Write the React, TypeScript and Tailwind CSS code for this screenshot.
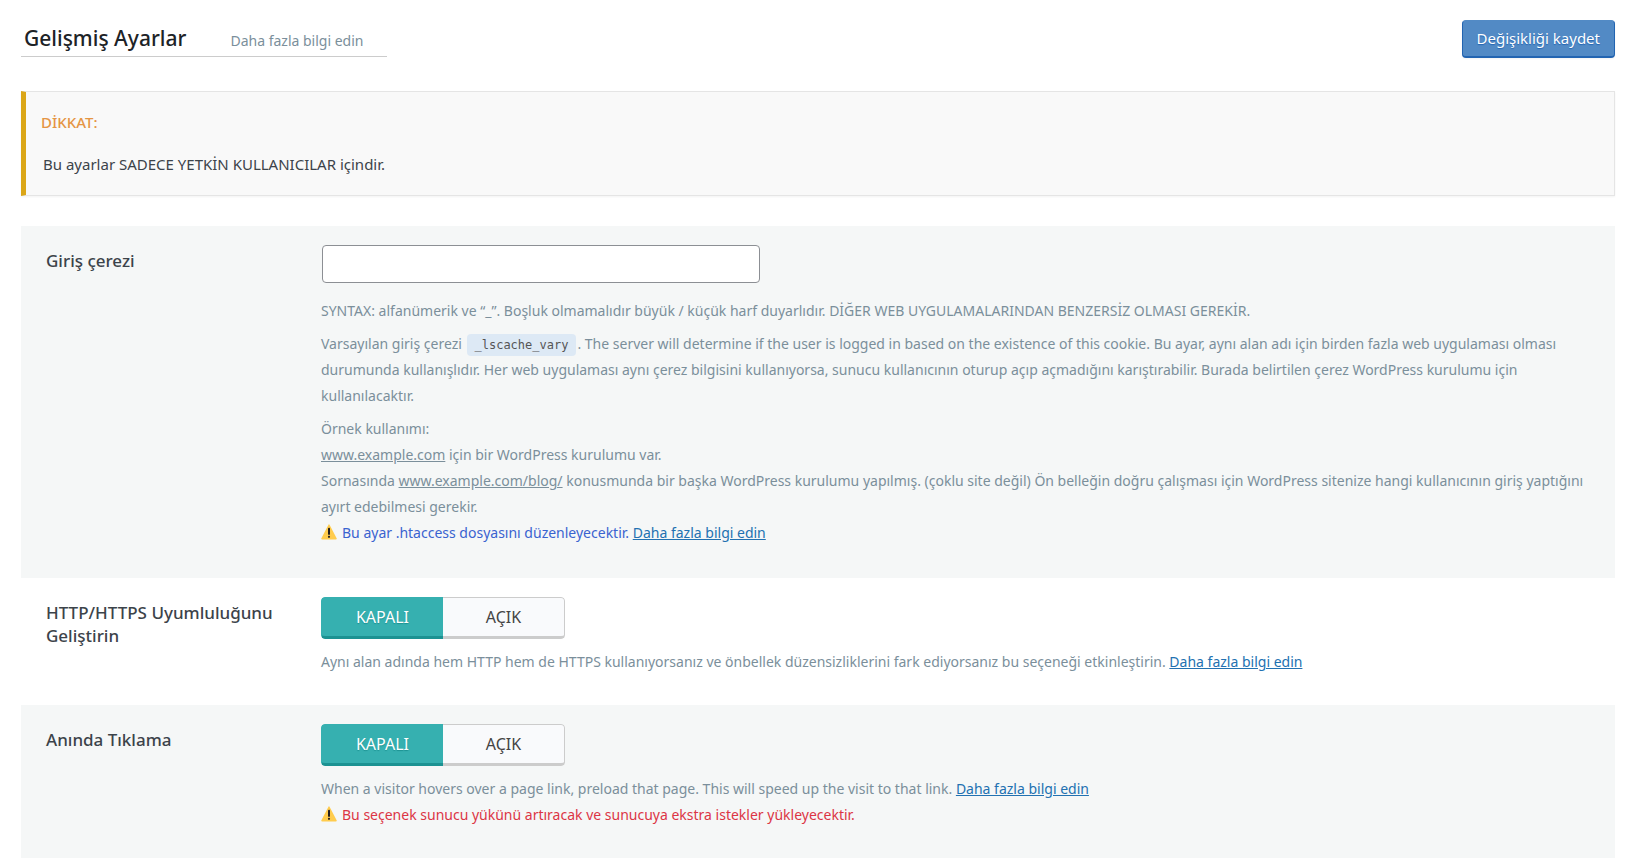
import { useState } from "react";
import type { ReactNode } from "react";

const WarningIcon = () => (
  <svg
    viewBox="0 0 36 36"
    className="inline-block w-4 h-4 mr-[5px] align-[-2px]"
    aria-hidden="true"
  >
    <path
      fill="#FFCC4D"
      d="M2.653 35C.811 35-.001 33.662.847 32.027L16.456 1.972c.849-1.635 2.238-1.635 3.087 0l15.609 30.056c.85 1.634.037 2.972-1.805 2.972H2.653z"
    />
    <path
      fill="#231F20"
      d="M15.583 28.953c0-1.333 1.085-2.418 2.419-2.418 1.333 0 2.418 1.085 2.418 2.418 0 1.334-1.086 2.419-2.418 2.419-1.334 0-2.419-1.085-2.419-2.419zm.186-18.293c0-1.302.961-2.108 2.232-2.108 1.241 0 2.233.837 2.233 2.108v11.938c0 1.271-.992 2.108-2.233 2.108-1.271 0-2.232-.807-2.232-2.108V10.66z"
    />
  </svg>
);

const LearnMore = () => (
  <a href="#" className="text-[#2271b1] underline">
    Daha fazla bilgi edin
  </a>
);

interface SettingRowProps {
  title: ReactNode;
  shaded?: boolean;
  children: ReactNode;
}

const SettingRow = ({ title, shaded, children }: SettingRowProps) => (
  <section
    className={`flex items-start pl-[25px] pr-6 pt-[19px] pb-[30px] ${
      shaded ? "bg-[#f5f7f7]" : "bg-white"
    }`}
  >
    <div className="w-[275px] shrink-0 pr-8 pt-1 text-[17px] leading-[23px] font-medium text-[#3c434a]">
      {title}
    </div>
    <div className="min-w-0 flex-1">{children}</div>
  </section>
);

interface ToggleProps {
  name: string;
  label: string;
}

const Toggle = ({ name, label }: ToggleProps) => {
  const [value, setValue] = useState("off");

  return (
    <div
      role="radiogroup"
      aria-label={label}
      className="inline-flex h-[42px] overflow-hidden rounded align-top text-base"
    >
      <label className="relative flex w-[122px] cursor-pointer">
        <input
          type="radio"
          name={name}
          checked={value === "off"}
          onChange={() => setValue("off")}
          className="peer sr-only"
        />
        <span className="flex flex-1 items-center justify-center rounded-l border border-r-0 border-b-3 border-[#ccc] bg-[#f9fafc] text-[#444] peer-checked:border-[#36b0b0] peer-checked:border-b-[#1c9292] peer-checked:bg-[#36b0b0] peer-checked:text-white peer-checked:text-shadow-[0_1px_1px_#1c9292]">
          KAPALI
        </span>
      </label>
      <label className="relative flex w-[122px] cursor-pointer">
        <input
          type="radio"
          name={name}
          checked={value === "on"}
          onChange={() => setValue("on")}
          className="peer sr-only"
        />
        <span className="flex flex-1 items-center justify-center rounded-r border border-l-0 border-b-3 border-[#ccc] bg-[#f9fafc] text-[#444] peer-checked:border-[#36b0b0] peer-checked:border-b-[#1c9292] peer-checked:bg-[#36b0b0] peer-checked:text-white peer-checked:text-shadow-[0_1px_1px_#1c9292]">
          AÇIK
        </span>
      </label>
    </div>
  );
};

const App = () => {
  const [cookie, setCookie] = useState("");

  return (
    <main className="min-h-screen bg-white px-[21px] pt-5 font-['Noto_Sans','Open_Sans',sans-serif] text-[#3c434a]">
      {/* Page header */}
      <header className="flex items-start justify-between">
        <div className="flex items-baseline gap-11 border-b border-[#ccc] pl-[3px] pr-6">
          <h1 className="text-[21px] leading-9 font-medium text-[#1d2327]">
            Gelişmiş Ayarlar
          </h1>
          <a href="#" className="text-sm text-[#7b8f9b]">
            Daha fazla bilgi edin
          </a>
        </div>
        <button
          type="button"
          className="h-[38px] rounded border border-b-2 border-[#2264b1] border-t-[#528ac5] bg-[#528ac5] px-[14px] text-[15px] text-white shadow-xs text-shadow-[0_1px_1px_#2264b1]"
        >
          Değişikliği kaydet
        </button>
      </header>

      {/* Notice */}
      <div className="mt-[33px] border border-l-5 border-[#e5e5e5] border-l-[#dba617] bg-[#f9f9f9] px-[15px] pt-[18px] pb-[19px] shadow-xs">
        <h2 className="text-[15px] leading-[24px] font-medium text-[#e59544]">
          DİKKAT:
        </h2>
        <p className="mt-[18px] pl-[2px] text-[15px] leading-[24px]">
          Bu ayarlar SADECE YETKİN KULLANICILAR içindir.
        </p>
      </div>

      {/* Settings */}
      <div className="mt-[30px] text-sm leading-[26px] text-[#7b8f9b]">
        <SettingRow
          shaded
          title={<label htmlFor="login-cookie">Giriş çerezi</label>}
        >
          <input
            id="login-cookie"
            type="text"
            value={cookie}
            onChange={(e) => setCookie(e.target.value)}
            className="ml-px block h-[38px] w-full max-w-[438px] rounded border border-[#8c8f94] bg-white px-2 text-[#2c3338]"
          />
          <p className="mt-[15px]">
            SYNTAX: alfanümerik ve “_”. Boşluk olmamalıdır büyük / küçük harf
            duyarlıdır. DİĞER WEB UYGULAMALARINDAN BENZERSİZ OLMASI GEREKİR.
          </p>
          <p className="mt-[7px]">
            Varsayılan giriş çerezi{" "}
            <code className="mx-px rounded bg-[#dde9f5] px-2 py-1 font-['DejaVu_Sans_Mono',monospace] text-xs text-[#555]">
              _lscache_vary
            </code>
            . The server will determine if the user is logged in based on the
            existence of this cookie. Bu ayar, aynı alan adı için birden fazla
            web uygulaması olması durumunda kullanışlıdır. Her web uygulaması
            aynı çerez bilgisini kullanıyorsa, sunucu kullanıcının oturup açıp
            açmadığını karıştırabilir. Burada belirtilen çerez WordPress
            kurulumu için kullanılacaktır.
          </p>
          <p className="mt-[7px] pb-[2px]">
            Örnek kullanımı:
            <br />
            <a href="#" className="underline">
              www.example.com
            </a>{" "}
            için bir WordPress kurulumu var.
            <br />
            Sornasında{" "}
            <a href="#" className="underline">
              www.example.com/blog/
            </a>{" "}
            konusmunda bir başka WordPress kurulumu yapılmış. (çoklu site
            değil) Ön belleğin doğru çalışması için WordPress sitenize hangi
            kullanıcının giriş yaptığını ayırt edebilmesi gerekir.
            <br />
            <span className="text-[#3a63d0]">
              <WarningIcon />
              Bu ayar .htaccess dosyasını düzenleyecektir.
            </span>{" "}
            <LearnMore />
          </p>
        </SettingRow>

        <SettingRow title="HTTP/HTTPS Uyumluluğunu Geliştirin">
          <Toggle
            name="http-https"
            label="HTTP/HTTPS Uyumluluğunu Geliştirin"
          />
          <p className="mt-[10px]">
            Aynı alan adında hem HTTP hem de HTTPS kullanıyorsanız ve önbellek
            düzensizliklerini fark ediyorsanız bu seçeneği etkinleştirin.{" "}
            <LearnMore />
          </p>
        </SettingRow>

        <SettingRow shaded title="Anında Tıklama">
          <Toggle name="instant-click" label="Anında Tıklama" />
          <p className="mt-[10px]">
            When a visitor hovers over a page link, preload that page. This will
            speed up the visit to that link. <LearnMore />
            <br />
            <span className="text-[#dc3545]">
              <WarningIcon />
              Bu seçenek sunucu yükünü artıracak ve sunucuya ekstra istekler
              yükleyecektir.
            </span>
          </p>
        </SettingRow>
      </div>
    </main>
  );
};

export default App;
